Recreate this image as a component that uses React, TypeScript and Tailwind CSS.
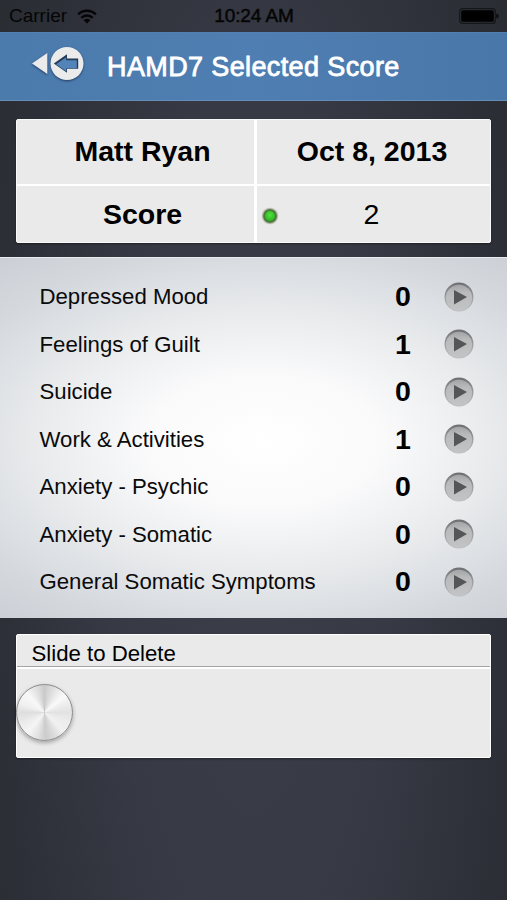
import { useState } from 'react';

interface ScoreItem {
  label: string;
  value: number;
}

const items: ScoreItem[] = [
  { label: 'Depressed Mood', value: 0 },
  { label: 'Feelings of Guilt', value: 1 },
  { label: 'Suicide', value: 0 },
  { label: 'Work & Activities', value: 1 },
  { label: 'Anxiety - Psychic', value: 0 },
  { label: 'Anxiety - Somatic', value: 0 },
  { label: 'General Somatic Symptoms', value: 0 },
];

const WifiIcon = () => (
  <svg width="20" height="15" viewBox="0 0 20 15" fill="none" stroke="#050506" strokeWidth="2.5">
    <path d="M1.2 5.4a12.6 12.6 0 0 1 17.6 0" />
    <path d="M4.3 8.8a8.2 8.2 0 0 1 11.4 0" />
    <path d="M10 14.4 6.7 11.2a4.7 4.7 0 0 1 6.6 0Z" fill="#050506" stroke="none" />
  </svg>
);

const BatteryIcon = () => (
  <svg width="40" height="16" viewBox="0 0 40 16">
    <rect x="0.6" y="0.6" width="35.8" height="14.8" rx="3" fill="none" stroke="#15171a" strokeWidth="1.2" />
    <rect x="2.2" y="2.2" width="32.6" height="11.6" rx="1.6" fill="#000" />
    <path d="M37.4 5.4q2.2.6 2.2 2.6t-2.2 2.6Z" fill="#08090b" />
  </svg>
);

const BackIcon = () => (
  <svg width="54" height="37" viewBox="0 0 54 37" className="drop-shadow-[0_1px_1px_rgba(20,40,70,0.75)]">
    <path d="M1 18.4 16.3 8v21Z" fill="#ebebeb" />
    <circle cx="36" cy="18.5" r="16.5" fill="#ebebeb" />
    <path d="M22.8 18.6 36 9.2v4.3h11.2v10.2H36v4Z" fill="#243a57" />
    <path d="M25 19.2 35.2 12.2v3.1h10.6v7.9H35.4v3.4Z" fill="#5283b9" />
  </svg>
);

const PlayIcon = () => (
  <svg width="30" height="30" viewBox="0 0 30 30">
    <defs>
      <linearGradient id="play-face" x1="0" y1="0" x2="0" y2="1">
        <stop offset="0" stopColor="#a3a4a6" />
        <stop offset="0.3" stopColor="#b9babb" />
        <stop offset="1" stopColor="#c3c4c5" />
      </linearGradient>
      <linearGradient id="play-rim" x1="0" y1="0" x2="0" y2="1">
        <stop offset="0" stopColor="#6d6e71" />
        <stop offset="0.5" stopColor="#9c9d9f" />
        <stop offset="1" stopColor="#bdbebf" />
      </linearGradient>
    </defs>
    <circle cx="15" cy="15" r="14.5" fill="url(#play-rim)" />
    <circle cx="15" cy="15.8" r="13.1" fill="url(#play-face)" />
    <path d="M10 8 23 15 10 22.5Z" fill="#555657" />
  </svg>
);

const StatusBar = () => (
  <div className="grid h-8 grid-cols-3 items-center pr-2 pl-[9px] text-[19px] leading-8 text-[#050506]">
    <div className="flex items-center gap-[10px]">
      <span>Carrier</span>
      <WifiIcon />
    </div>
    <span className="text-center tracking-[-0.1px] [-webkit-text-stroke:0.5px_#050506]">10:24 AM</span>
    <div className="flex justify-end">
      <BatteryIcon />
    </div>
  </div>
);

const Header = () => (
  <header className="flex h-[69px] border-t border-b border-t-[#5480b1] border-b-[#648db8] bg-[linear-gradient(90deg,#4b7aac,#4f7eb2_50%,#4977aa)]">
    <button className="mt-[12px] ml-[31px] h-[37px] w-[54px]">
      <BackIcon />
    </button>
    <h1 className="ml-[22px] text-[27px] leading-[68px] tracking-[0.38px] text-white [-webkit-text-stroke:0.8px_#fff]">
      HAMD7 Selected Score
    </h1>
  </header>
);

const SummaryCard = () => (
  <section className="mx-4 mt-[18px] grid h-[124px] grid-cols-[237px_3px_1fr] grid-rows-[64px_2px_1fr] rounded-xs border border-[#f9f9f9] bg-[#eaeaea] text-[28.5px] font-bold text-black shadow-[0_1px_2px_rgba(0,0,0,0.4)]">
    <div className="pl-3.5 text-center leading-[62px]">Matt Ryan</div>
    <div className="row-span-3 bg-white" />
    <div className="pr-[3px] text-center leading-[62px]">Oct 8, 2013</div>
    <div className="bg-white" />
    <div className="bg-white" />
    <div className="pl-3.5 text-center leading-[57px]">Score</div>
    <div className="flex items-center pl-1.5 font-normal">
      <span className="mt-0.5 size-[14px] rounded-full border-2 border-[#4c7a38] bg-[radial-gradient(circle_at_50%_40%,#52e043,#30bd25_65%,#2a9a20)] shadow-[0_0_1px_1px_#a6aa9d]" />
      <span className="flex-1 pr-[24px] text-center leading-[57px]">2</span>
    </div>
  </section>
);

const ScoreList = () => (
  <section className="mt-3.5 h-[361px] border-t border-[#e9ebee] bg-[radial-gradient(ellipse_420px_240px_at_52%_51%,#ffffff_0%,#fafafb_28%,#e8eaec_55%,#d5d9de_80%,#cbcfd5_100%)] pt-[15px]">
    {items.map((item) => (
      <div key={item.label} className="flex h-[47.5px] items-center pr-[33px] pl-[39.5px] text-[#0a0a0a]">
        <span className="flex-1 text-[22.2px]">{item.label}</span>
        <span className="w-4 text-center text-[28.5px] font-bold text-black">{item.value}</span>
        <button className="ml-[33px]">
          <PlayIcon />
        </button>
      </div>
    ))}
  </section>
);

const SlideToDelete = () => {
  const [offset, setOffset] = useState(0);

  return (
    <section className="mx-4 mt-4 h-[124px] rounded-xs border border-white bg-[#eaeaea] shadow-[0_1px_2px_rgba(0,0,0,0.4)]">
      <div className="h-[32px] border-b border-[#a5a5a7] pl-[14.5px] text-[22.2px] leading-[37px] text-black">
        Slide to Delete
      </div>
      <div className="border-t-2 border-white pt-[15px]">
        {/* Brushed metal knob */}
        <div
          onPointerMove={(e) => e.buttons && setOffset(Math.min(416, Math.max(0, offset + e.movementX)))}
          className="-ml-px size-[57px] rounded-full border-[1.5px] border-[#8b8b8b] bg-[conic-gradient(#c9c9c9_0deg,#d4d4d4_8deg,#f0f0f0_38deg,#fafafa_50deg,#efefef_65deg,#e2e2e2_90deg,#ececec_110deg,#f1f1f1_135deg,#d9d9d9_160deg,#cccccc_178deg,#e4e4e4_198deg,#f5f5f5_220deg,#ededed_240deg,#dedede_270deg,#f0f0f0_290deg,#f8f8f8_318deg,#dcdcdc_345deg,#c9c9c9_360deg)] shadow-[0_2px_4px_rgba(0,0,0,0.3)]"
          style={{ transform: `translateX(${offset}px)` }}
        />
      </div>
    </section>
  );
};

const App = () => (
  <main className="h-[900px] w-[507px] overflow-hidden bg-[radial-gradient(ellipse_310px_1000px_at_50%_60%,#3b3e49_0%,#373a44_45%,#2d3038_80%,#292c31_100%)] font-['Liberation_Sans',Arial,sans-serif]">
    <StatusBar />
    <Header />
    <SummaryCard />
    <ScoreList />
    <SlideToDelete />
  </main>
);

export default App;
